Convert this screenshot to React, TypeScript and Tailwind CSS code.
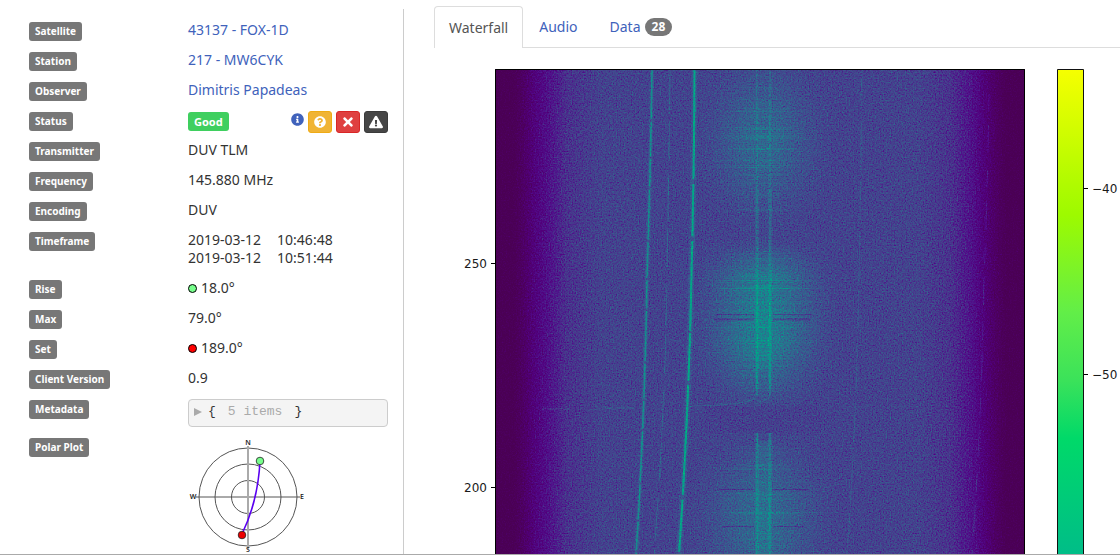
import type { ReactNode } from 'react';
import { FaExclamationTriangle, FaInfoCircle, FaQuestionCircle, FaTimes } from 'react-icons/fa';

function Row({ label, children }: { label: string; children: ReactNode }) {
  return (
    <div className="flex items-start pb-[9px]">
      <dt className="w-[159px] shrink-0">
        <span className="mt-0.5 block w-fit rounded-[3px] bg-[#777777] px-1.5 text-[10px] leading-[19px] font-bold text-white">
          {label}
        </span>
      </dt>
      <dd className="w-[200px] leading-5">{children}</dd>
    </div>
  );
}

function Dot({ className }: { className: string }) {
  return <span className={`mr-1 inline-block h-[9px] w-[9px] rounded-full border border-black ${className}`} />;
}

function PolarPlot() {
  return (
    <svg viewBox="0 0 120 120" className="mt-[3px] h-[120px] w-[120px]" role="img" aria-label="Polar plot">
      <g fill="none" stroke="#555" strokeWidth="1">
        <circle cx="60" cy="58" r="49" />
        <circle cx="60" cy="58" r="33" />
        <circle cx="60" cy="58" r="16.5" />
        <path d="M8 58H112" />
        <path d="M60 7V110" stroke="#aaa" strokeWidth="2" />
      </g>
      <path d="M72 22Q70 62 54 95" fill="none" stroke="#5a00f0" strokeWidth="1.6" />
      <circle cx="72" cy="22" r="3.8" fill="#77ff8c" stroke="#222" strokeWidth="0.8" />
      <circle cx="54" cy="96" r="3.8" fill="#ee0000" stroke="#222" strokeWidth="0.8" />
      <g fontSize="7" fontWeight="600" textAnchor="middle" fill="#222">
        <text x="60" y="6">N</text>
        <text x="60" y="113">S</text>
        <text x="5" y="60">W</text>
        <text x="114" y="60">E</text>
      </g>
    </svg>
  );
}

function random(seed: number) {
  let s = seed;
  return () => {
    s = (s * 16807) % 2147483647;
    return s / 2147483647;
  };
}

const rand = random(42);
const bursts = [
  { from: 6, to: 142, center: 80, reach: 74, strength: 0.16 },
  { from: 178, to: 330, center: 245, reach: 84, strength: 0.2 },
  { from: 372, to: 486, center: 445, reach: 80, strength: 0.16 },
];
const streaks = bursts.flatMap((b) =>
  Array.from({ length: Math.round((b.to - b.from) / 1.1) }, () => {
    const y = Math.round(b.from + rand() * (b.to - b.from));
    const spread = 1 - Math.abs(y - b.center) / (b.to - b.from);
    const w = b.reach * spread * (0.5 + rand() * 0.6);
    return { y, w, o: b.strength * rand() * spread };
  }),
);

const red = '0.294 0.306 0.32 0.312 0.282 0.247 0.188 0.118 0.02 0 0';
const green = '0 0 0 0.078 0.215 0.314 0.412 0.51 0.608 0.667 0.745';
const blue = '0.333 0.392 0.49 0.549 0.549 0.56 0.56 0.56 0.55 0.51 0.49';

function Waterfall() {
  return (
    <svg viewBox="0 0 686 486" className="block w-full" role="img" aria-label="Waterfall spectrogram">
      <defs>
        <linearGradient id="floor">
          <stop offset="0" stopColor="#000" />
          <stop offset="0.035" stopColor="#020202" />
          <stop offset="0.075" stopColor="#333" />
          <stop offset="0.1" stopColor="#474747" />
          <stop offset="0.135" stopColor="#626262" />
          <stop offset="0.2" stopColor="#727272" />
          <stop offset="0.5" stopColor="#737373" />
          <stop offset="0.8" stopColor="#727272" />
          <stop offset="0.86" stopColor="#636363" />
          <stop offset="0.9" stopColor="#484848" />
          <stop offset="0.93" stopColor="#282828" />
          <stop offset="0.965" stopColor="#020202" />
          <stop offset="1" stopColor="#000" />
        </linearGradient>
        <radialGradient id="burst">
          <stop offset="0" stopColor="#fff" stopOpacity="1" />
          <stop offset="0.25" stopColor="#fff" stopOpacity="0.82" />
          <stop offset="0.5" stopColor="#fff" stopOpacity="0.45" />
          <stop offset="0.75" stopColor="#fff" stopOpacity="0.15" />
          <stop offset="1" stopColor="#fff" stopOpacity="0" />
        </radialGradient>
        <linearGradient id="streak">
          <stop offset="0" stopColor="#fff" stopOpacity="0" />
          <stop offset="0.3" stopColor="#fff" stopOpacity="0.6" />
          <stop offset="0.5" stopColor="#fff" />
          <stop offset="0.7" stopColor="#fff" stopOpacity="0.6" />
          <stop offset="1" stopColor="#fff" stopOpacity="0" />
        </linearGradient>
        <linearGradient id="scale" x1="0" x2="0" y1="0" y2="1">
          <stop offset="0" stopColor="#f6ff00" />
          <stop offset="0.3" stopColor="#9dfa00" />
          <stop offset="0.5" stopColor="#62ee48" />
          <stop offset="0.64" stopColor="#3be25a" />
          <stop offset="0.76" stopColor="#00d969" />
          <stop offset="1" stopColor="#00bd88" />
        </linearGradient>
        <filter id="spectrum" x="0" y="0" width="1" height="1" colorInterpolationFilters="sRGB">
          <feTurbulence type="fractalNoise" baseFrequency="0.73 0.67" numOctaves={2} seed={7} />
          <feColorMatrix values="0.5 0.5 0 0 0  0.5 0.5 0 0 0  0.5 0.5 0 0 0  0 0 0 0 1" result="noise" />
          <feComposite in="SourceGraphic" in2="noise" operator="arithmetic" k1={0.4} k2={0.8} k3={0.5} k4={-0.25} />
          <feComponentTransfer>
            <feFuncR type="table" tableValues={red} />
            <feFuncG type="table" tableValues={green} />
            <feFuncB type="table" tableValues={blue} />
            <feFuncA type="linear" slope={0} intercept={1} />
          </feComponentTransfer>
        </filter>
        <clipPath id="frame">
          <rect x="61" y="0" width="530" height="486" />
        </clipPath>
      </defs>
      <g clipPath="url(#frame)">
        <g filter="url(#spectrum)">
          <rect x="61" y="0" width="530" height="486" fill="url(#floor)" />
          <ellipse cx="329" cy="70" rx="74" ry="104" fill="url(#burst)" opacity="0.24" />
          <ellipse cx="329" cy="205" rx="82" ry="40" fill="url(#burst)" opacity="0.2" />
          <ellipse cx="329" cy="260" rx="78" ry="92" fill="url(#burst)" opacity="0.42" />
          <ellipse cx="329" cy="450" rx="80" ry="100" fill="url(#burst)" opacity="0.27" />
          {streaks.map((s, i) => (
            <rect key={i} x={329 - s.w} y={s.y} width={s.w * 2} height="1" fill="url(#streak)" opacity={s.o} />
          ))}
          <path d="M329.500 215V300M329.500 372V486" stroke="#fff" strokeWidth="12" opacity="0.1" />
          <g stroke="#222" opacity="0.35">
            <path d="M282 245.5H320M339 245.5H378" />
            <path d="M280 250.5H320M339 250.5H376" strokeWidth="2" />
            <path d="M285 420.5H320M339 420.5H374M288 457.5H320M339 457.5H370" />
          </g>
          <rect x="270" y="337" width="118" height="27" fill="#6f6f6f" opacity="0.8" />
          <g fill="none" stroke="#fff">
            <g strokeWidth="4" opacity="0.12">
              <path d="M323 120V320M336 120V320M323 364V486M336 364V486" />
              <path d="M218 0Q217 90 213 205Q211 345 202 486" />
              <path d="M260.500 0Q260 110 257.500 205Q255 340 245 486" strokeWidth="6" />
            </g>
            <path d="M323 0V120" opacity="0.18" strokeWidth="2" strokeDasharray="9 2 4 1" />
            <path d="M336 0V120" opacity="0.2" strokeWidth="2" strokeDasharray="7 1 5 2" />
            <path d="M323 120V215M336 120V215" opacity="0.15" strokeWidth="2" strokeDasharray="8 1 5 2" />
            <path d="M323 215V320M336 215V320" opacity="0.36" strokeWidth="2" strokeDasharray="12 1 8 1" />
            <path d="M323 320V326M336 320V326" opacity="0.22" strokeWidth="2" />
            <path d="M323 364V486M336 364V486" opacity="0.22" strokeWidth="2" strokeDasharray="9 1 7 1" />
            <path d="M323 370Q323 377 327 378M336 370Q336 377 340 378" opacity="0.3" />
            <path d="M218 0Q217 90 213 205Q211 345 202 486" opacity="0.48" strokeWidth="1.6" strokeDasharray="50 3 35 2 28 3" />
            <path d="M236 0Q235 90 233 205Q231 345 220 486" opacity="0.25" strokeDasharray="45 8 38 16" />
            <path d="M260.500 0Q260 110 257.500 205Q255 340 245 486" opacity="0.72" strokeWidth="2" strokeDasharray="110 5 52 5 90 2 48 4" />
            <path d="M428 0Q427 110 425 205Q423 345 413 486" opacity="0.16" strokeDasharray="40 12 50 9" />
            <path d="M555 25Q553 150 550 205Q548 345 538 486" opacity="0.18" strokeDasharray="18 13 28 17" />
            <path d="M108 340H136M162 339H200" opacity="0.22" />
            <path d="M256 337.500Q304 336 318 331Q322 329 323 325M324 333Q334 332 336 326" opacity="0.22" />
          </g>
        </g>
        <path d="M61.500 486V0.500H590.500V486" fill="none" stroke="#000" />
      </g>
      <path d="M623.500 486V0.500H649.500V486" fill="url(#scale)" stroke="#111" />
      <path d="M57 194.500H61M57 418.500H61M650 119.500H654M650 305.500H654" stroke="#000" />
      <g fontFamily="DejaVu Sans, sans-serif" fontSize="12" fill="#1a1a1a">
        <text x="53" y="199" textAnchor="end">250</text>
        <text x="53" y="423" textAnchor="end">200</text>
        <text x="658" y="124">−40</text>
        <text x="658" y="310">−50</text>
      </g>
    </svg>
  );
}

export default function App() {
  return (
    <div className="flex h-screen overflow-hidden border-b border-[#aaaaaa] bg-white font-['Noto_Sans',sans-serif] text-sm text-[#333333]">
      <aside className="mt-[9px] w-[404px] shrink-0 border-r border-[#cccccc] pt-[11px] pl-[29px]">
        <dl>
          <Row label="Satellite">
            <a href="#satellite" className="text-[#4062bb]">43137 - FOX-1D</a>
          </Row>
          <Row label="Station">
            <a href="#station" className="text-[#4062bb]">217 - MW6CYK</a>
          </Row>
          <Row label="Observer">
            <a href="#observer" className="text-[#4062bb]">Dimitris Papadeas</a>
          </Row>
          <Row label="Status">
            <div className="flex h-5 items-center pt-[3px]">
              <span className="rounded-[3px] bg-[#3fcf5f] px-1.5 text-[11px] leading-[19px] font-bold text-white">Good</span>
              <span className="ml-auto flex items-center gap-1">
                <a href="#vetting" aria-label="Vetting information" className="mb-1 text-[#4062bb]">
                  <FaInfoCircle size={13} />
                </a>
                <button type="button" aria-label="Vet as unknown" className="flex h-[22px] w-6 items-center justify-center rounded-[3px] border border-[#efab15] bg-[#f0b435] text-white">
                  <FaQuestionCircle size={12} />
                </button>
                <button type="button" aria-label="Vet as bad" className="flex h-[22px] w-6 items-center justify-center rounded-[3px] border border-[#d92626] bg-[#df4040] text-white">
                  <FaTimes size={14} />
                </button>
                <button type="button" aria-label="Vet as failed" className="flex h-[22px] w-6 items-center justify-center rounded-[3px] border border-[#3b3b3b] bg-[#464646] text-white">
                  <FaExclamationTriangle size={14} />
                </button>
              </span>
            </div>
          </Row>
          <Row label="Transmitter">DUV TLM</Row>
          <Row label="Frequency">145.880 MHz</Row>
          <Row label="Encoding">DUV</Row>
          <Row label="Timeframe">
            <div className="pt-px pb-0.5 leading-[18px]">
              <div className="flex gap-4"><span>2019-03-12</span><span>10:46:48</span></div>
              <div className="flex gap-4"><span>2019-03-12</span><span>10:51:44</span></div>
            </div>
          </Row>
          <Row label="Rise"><Dot className="bg-[#77ff8c]" />18.0°</Row>
          <Row label="Max">79.0°</Row>
          <Row label="Set"><Dot className="bg-[#ff0000]" />189.0°</Row>
          <Row label="Client Version">0.9</Row>
          <Row label="Metadata">
            <div className="pt-px">
              <button type="button" className="flex h-7 w-full items-center rounded-[4px] border border-[#cccccc] bg-[#f4f4f4] px-[5px] pb-0.5 font-['Liberation_Mono',monospace] text-[13px] text-[#333333]">
                <svg viewBox="0 0 8 8" className="mr-1.5 h-2 w-2" aria-hidden="true"><path d="M0 0L8 4L0 8Z" fill="#aaa" /></svg>
                <span>{'{'}</span>
                <span className="mx-3 text-[#aaaaaa]">5 items</span>
                <span>{'}'}</span>
              </button>
            </div>
          </Row>
          <Row label="Polar Plot"><PolarPlot /></Row>
        </dl>
      </aside>
      <main className="min-w-0 flex-1 pt-1.5 pl-[30px]">
        <nav className="flex h-[42px] border-b border-[#dddddd]">
          <a href="#waterfall" className="h-[42px] rounded-t-[4px] border border-b-0 border-[#dddddd] bg-white px-3.5 leading-[41px] text-[#555555]">Waterfall</a>
          <a href="#audio" className="px-4 leading-[41px] text-[#4062bb]">Audio</a>
          <a href="#data" className="flex items-center gap-1 px-4 text-[#4062bb]">
            Data
            <span className="rounded-full bg-[#777777] px-[7px] text-xs leading-[18px] font-bold text-white">28</span>
          </a>
        </nav>
        <div className="pt-[21px]">
          <Waterfall />
        </div>
      </main>
    </div>
  );
}
